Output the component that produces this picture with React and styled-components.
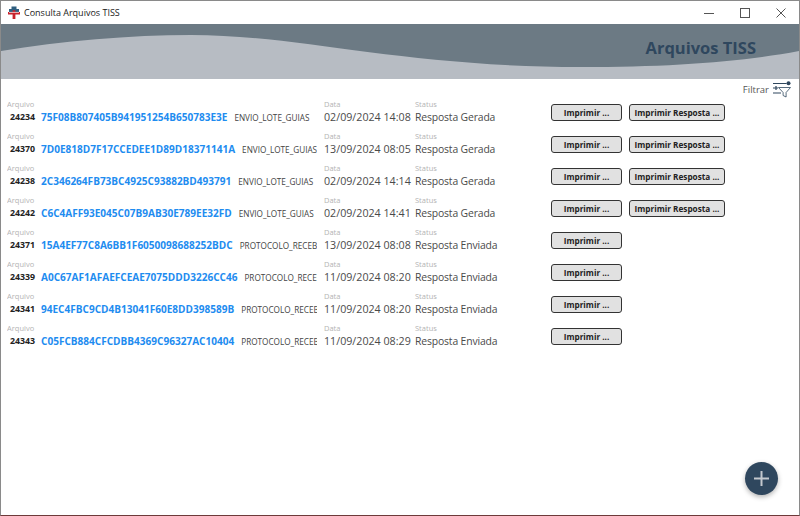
import React from 'react';
import styled, { createGlobalStyle } from 'styled-components';

const Global = createGlobalStyle`
  html, body { margin: 0; padding: 0; background: #fff; }
  body { font-family: "Open Sans", "Noto Sans", "Liberation Sans", sans-serif; }
  * { box-sizing: border-box; }
`;

const Window = styled.div`
  position: relative;
  width: 800px;
  height: 516px;
  display: flex;
  flex-direction: column;
  overflow: hidden;
  background: #fff;
  border: 1px solid #8a8a8a;
  border-bottom-color: #6e3a3a;
`;

const TitleBar = styled.div`
  height: 23px;
  flex: none;
  display: flex;
  align-items: center;
  padding-left: 7px;
`;

const AppTitle = styled.span`
  font-size: 9px;
  color: #1a1a1a;
  margin-left: 4px;
  flex: 1;
`;

const WinButton = styled.div`
  width: 36px;
  height: 23px;
  display: flex;
  align-items: center;
  justify-content: center;
`;

const Banner = styled.div`
  position: relative;
  height: 55px;
  flex: none;
  background: #6c7a84;
`;

const Wave = styled.svg`
  display: block;
  width: 798px;
  height: 55px;
`;

const BannerTitle = styled.h1`
  position: absolute;
  top: 12px;
  right: 43px;
  margin: 0;
  font-size: 16.5px;
  line-height: 24px;
  font-weight: 700;
  color: #2f475e;
`;

const FilterBar = styled.div`
  height: 20px;
  flex: none;
  display: flex;
  align-items: center;
  justify-content: flex-end;
  gap: 4px;
  padding-right: 7px;
`;

const FilterLabel = styled.span`
  font-size: 9.5px;
  color: #555;
`;

const List = styled.div`
  display: flex;
  flex-direction: column;
  padding-left: 6px;
`;

const Row = styled.div`
  height: 32px;
  display: flex;
  align-items: flex-start;
`;

const MainCell = styled.div`
  width: 310px;
  flex: none;
  overflow: hidden;
`;

const Label = styled.div`
  font-size: 7.5px;
  line-height: 10px;
  color: #b4b4b4;
`;

const MainLine = styled.div`
  display: flex;
  align-items: center;
  height: 16px;
  white-space: nowrap;
  padding-left: 3px;
`;

const Id = styled.span`
  font-size: 8.8px;
  font-weight: 700;
  color: #222;
  width: 31px;
  flex: none;
`;

const Hash = styled.span`
  font-size: 10.05px;
  font-weight: 700;
  color: #1e8cf0;
`;

const Kind = styled.span`
  font-size: 8.2px;
  color: #444;
  margin-left: 7px;
`;

const DateCell = styled.div`
  width: 91px;
  flex: none;
  margin-left: 7px;
`;

const StatusCell = styled.div`
  width: 136px;
  flex: none;
`;

const DateValue = styled.div`
  font-size: 10.7px;
  line-height: 16px;
  color: #4a4a4a;
  white-space: nowrap;
`;

const StatusValue = styled(DateValue)`
  font-size: 10.4px;
  letter-spacing: -0.15px;
`;

const Actions = styled.div`
  display: flex;
  gap: 7px;
  padding-top: 5px;
`;

const PrintButton = styled.button`
  width: ${p => p.$w}px;
  height: 17px;
  padding: 0;
  font-family: inherit;
  font-size: 8.2px;
  font-weight: 700;
  line-height: 14px;
  color: #222;
  background: #e1e1e1;
  border: 1px solid #333;
  border-radius: 3px;
`;

const Fab = styled.button`
  position: absolute;
  right: 21px;
  bottom: 20px;
  width: 33px;
  height: 33px;
  padding: 0;
  display: flex;
  align-items: center;
  justify-content: center;
  border: none;
  border-radius: 50%;
  background: #2f475e;
  box-shadow: 0 2px 5px rgba(0, 0, 0, 0.3);
`;

const rows = [
  ['24234', '75F08B807405B941951254B650783E3E', 'ENVIO_LOTE_GUIAS', '02/09/2024 14:08', 'Resposta Gerada', true],
  ['24370', '7D0E818D7F17CCEDEE1D89D18371141A', 'ENVIO_LOTE_GUIAS', '13/09/2024 08:05', 'Resposta Gerada', true],
  ['24238', '2C346264FB73BC4925C93882BD493791', 'ENVIO_LOTE_GUIAS', '02/09/2024 14:14', 'Resposta Gerada', true],
  ['24242', 'C6C4AFF93E045C07B9AB30E789EE32FD', 'ENVIO_LOTE_GUIAS', '02/09/2024 14:41', 'Resposta Gerada', true],
  ['24371', '15A4EF77C8A6BB1F6050098688252BDC', 'PROTOCOLO_RECEB', '13/09/2024 08:08', 'Resposta Enviada', false],
  ['24339', 'A0C67AF1AFAEFCEAE7075DDD3226CC46', 'PROTOCOLO_RECEB', '11/09/2024 08:20', 'Resposta Enviada', false],
  ['24341', '94EC4FBC9CD4B13041F60E8DD398589B', 'PROTOCOLO_RECEB', '11/09/2024 08:20', 'Resposta Enviada', false],
  ['24343', 'C05FCB884CFCDBB4369C96327AC10404', 'PROTOCOLO_RECEB', '11/09/2024 08:29', 'Resposta Enviada', false],
];

const Logo = () => (
  <svg width="12" height="13" viewBox="0 0 12 13">
    <path d="M3.5 0.5h5v2.5H11v3H1V3h2.5z" fill="#2f5f80" />
    <path d="M4.6 4.2h2.8v1.7H12v2.6H7.4V13H4.6V8.5H0V5.9h4.6z" fill="#c8232c" />
    <path d="M1 6.4h10" stroke="#fff" strokeWidth="0.7" />
  </svg>
);

const FilterIcon = () => (
  <svg width="19" height="17" viewBox="0 0 19 17" fill="none" stroke="#2f475e" strokeWidth="1.2">
    <path d="M0 2.5h13.5M0 7h5M0 12h8M3 5v4" />
    <path d="M5.5 6.5h12l-4.4 5V16l-3-1.5v-3z" strokeWidth="0.8" />
    <circle cx="15.5" cy="2.2" r="2" fill="#2f475e" stroke="none" />
  </svg>
);

export default function App() {
  return (
    <>
      <Global />
      <Window>
        <TitleBar>
          <Logo />
          <AppTitle>Consulta Arquivos TISS</AppTitle>
          <WinButton>
            <svg width="10" height="10" viewBox="0 0 10 10"><path d="M0 5.5h10" stroke="#555" /></svg>
          </WinButton>
          <WinButton>
            <svg width="10" height="10" viewBox="0 0 10 10"><rect x="0.5" y="0.5" width="9" height="9" fill="none" stroke="#555" /></svg>
          </WinButton>
          <WinButton>
            <svg width="10" height="10" viewBox="0 0 10 10"><path d="M0.5 0.5l9 9M9.5 0.5l-9 9" stroke="#555" /></svg>
          </WinButton>
        </TitleBar>
        <Banner>
          <Wave viewBox="0 0 798 55" preserveAspectRatio="none">
            <path d="M0 27C60 17 130 11 190 11C300 11 400 43 580 43C670 43 740 38 798 27V55H0Z" fill="#b7bcc3" />
          </Wave>
          <BannerTitle>Arquivos TISS</BannerTitle>
        </Banner>
        <FilterBar>
          <FilterLabel>Filtrar</FilterLabel>
          <FilterIcon />
        </FilterBar>
        <List>
          {rows.map(([id, hash, kind, date, status, hasReply]) => (
            <Row key={id}>
              <MainCell>
                <Label>Arquivo</Label>
                <MainLine>
                  <Id>{id}</Id>
                  <Hash>{hash}</Hash>
                  <Kind>{kind}</Kind>
                </MainLine>
              </MainCell>
              <DateCell>
                <Label>Data</Label>
                <DateValue>{date}</DateValue>
              </DateCell>
              <StatusCell>
                <Label>Status</Label>
                <StatusValue>{status}</StatusValue>
              </StatusCell>
              <Actions>
                <PrintButton $w={71}>Imprimir ...</PrintButton>
                {hasReply && <PrintButton $w={96}>Imprimir Resposta ...</PrintButton>}
              </Actions>
            </Row>
          ))}
        </List>
        <Fab aria-label="Adicionar">
          <svg width="15" height="15" viewBox="0 0 15 15"><path d="M7.5 0v15M0 7.5h15" stroke="#c3c8cd" strokeWidth="2" /></svg>
        </Fab>
      </Window>
    </>
  );
}
